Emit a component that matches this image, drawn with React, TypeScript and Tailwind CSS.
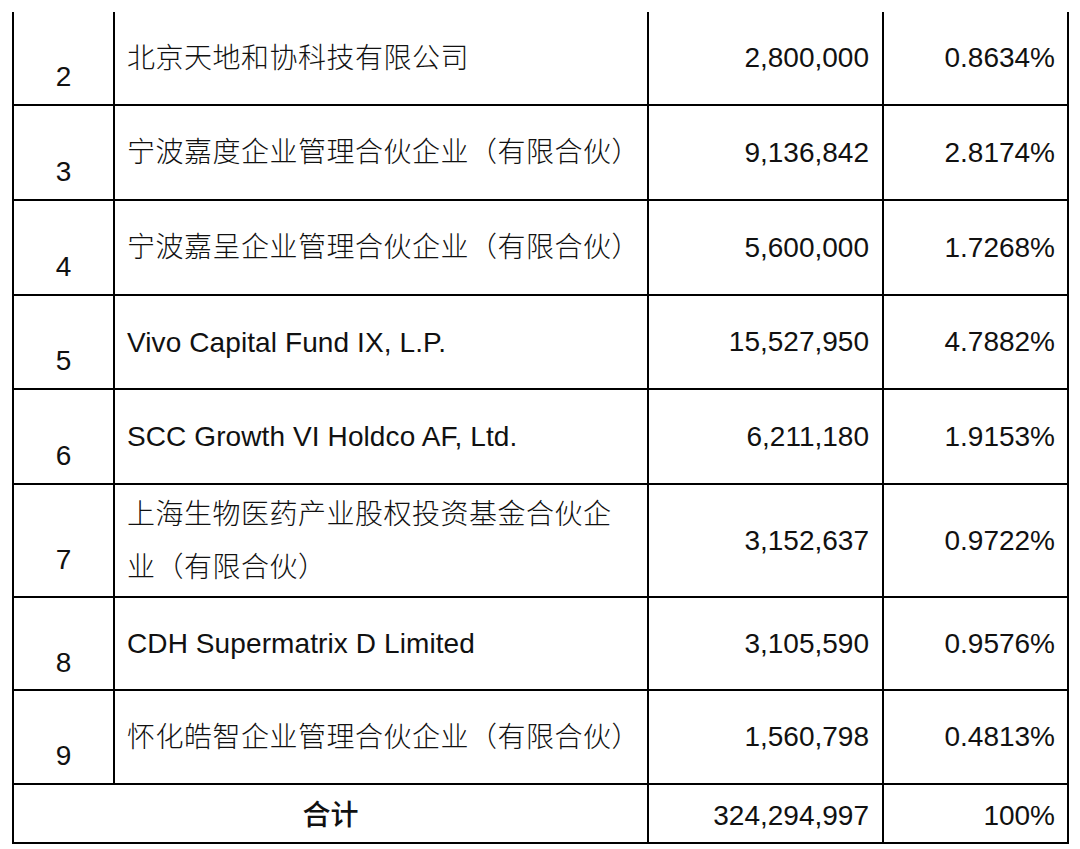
const rows = [
  { no: "2", name: "北京天地和协科技有限公司", shares: "2,800,000", pct: "0.8634%", h: "h-[94px]", cn: true },
  { no: "3", name: "宁波嘉度企业管理合伙企业（有限合伙）", shares: "9,136,842", pct: "2.8174%", h: "h-[95px]", cn: true },
  { no: "4", name: "宁波嘉呈企业管理合伙企业（有限合伙）", shares: "5,600,000", pct: "1.7268%", h: "h-[95px]", cn: true },
  { no: "5", name: "Vivo Capital Fund IX, L.P.", shares: "15,527,950", pct: "4.7882%", h: "h-[94px]", cn: false },
  { no: "6", name: "SCC Growth VI Holdco AF, Ltd.", shares: "6,211,180", pct: "1.9153%", h: "h-[95px]", cn: false },
  { no: "7", name: "上海生物医药产业股权投资基金合伙企\n业（有限合伙）", shares: "3,152,637", pct: "0.9722%", h: "h-[113px]", cn: true },
  { no: "8", name: "CDH Supermatrix D Limited", shares: "3,105,590", pct: "0.9576%", h: "h-[93px]", cn: false },
  { no: "9", name: "怀化皓智企业管理合伙企业（有限合伙）", shares: "1,560,798", pct: "0.4813%", h: "h-[94px]", cn: true },
];

const font = { fontFamily: '"Liberation Sans", "Noto Sans CJK SC", sans-serif' };

const App = () => {
  return (
    <div className="min-h-[849px] w-[1080px] bg-white pt-[12px] text-[28px] text-[#111]" style={font}>
      <div className="ml-[12px] w-[1057px] border-x-2 border-black">
        {rows.map((r) => (
          <div key={r.no} className={`flex ${r.h} border-b-2 border-black`}>
            <div className="flex w-[101px] shrink-0 items-center justify-center border-r-2 border-black pt-[38px]">
              {r.no}
            </div>
            <div
              className={`flex w-[534px] shrink-0 items-center whitespace-pre-line border-r-2 border-black pl-[12px] leading-[53px] ${
                r.cn ? "font-light tracking-[0.5px]" : "tracking-[0.1px]"
              }`}
            >
              {r.name}
            </div>
            <div className="flex w-[235px] shrink-0 items-center justify-end border-r-2 border-black pr-[13px]">
              {r.shares}
            </div>
            <div className="flex flex-1 items-center justify-end pr-[12px]">{r.pct}</div>
          </div>
        ))}
        <div className="flex h-[59px] border-b-2 border-black">
          <div className="flex w-[635px] shrink-0 items-center justify-center border-r-2 border-black pt-[4px] font-medium">
            合计
          </div>
          <div className="flex w-[235px] shrink-0 items-center justify-end border-r-2 border-black pr-[13px] pt-[4px]">
            324,294,997
          </div>
          <div className="flex flex-1 items-center justify-end pr-[12px] pt-[4px]">100%</div>
        </div>
      </div>
    </div>
  );
};

export default App;
